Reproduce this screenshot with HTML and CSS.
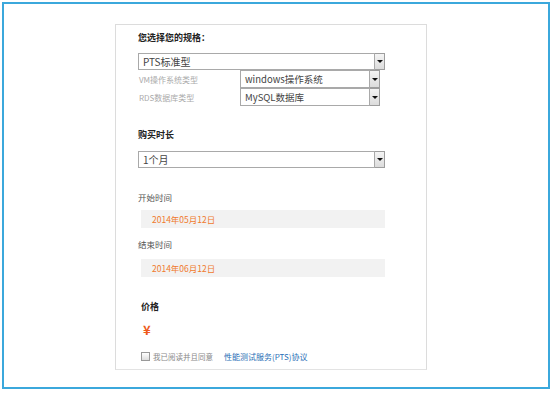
FILE: index.html
```html
<!DOCTYPE html>
<html lang="zh-CN">
<head>
    <meta charset="UTF-8">
    <meta name="viewport" content="width=device-width, initial-scale=1.0">
    <title>PTS购买</title>
    <link rel="stylesheet" href="styles.css">
</head>
<body>

    <div class="frame">
        <div class="card">
            <div class="title">您选择您的规格：</div>

            <div class="select wide">
                <span class="select-text">PTS标准型</span>
                <span class="arrow"></span>
            </div>

            <div class="row">
                <div class="row-label">VM操作系统类型</div>
                <div class="select narrow">
                    <span class="select-text">windows操作系统</span>
                    <span class="arrow"></span>
                </div>
            </div>
            <div class="row">
                <div class="row-label">RDS数据库类型</div>
                <div class="select narrow">
                    <span class="select-text">MySQL数据库</span>
                    <span class="arrow"></span>
                </div>
            </div>

            <div class="title section">购买时长</div>
            <div class="select wide">
                <span class="select-text">1个月</span>
                <span class="arrow"></span>
            </div>

            <div class="label">开始时间</div>
            <div class="date">2014年05月12日</div>

            <div class="label end">结束时间</div>
            <div class="date">2014年06月12日</div>

            <div class="title price">价格</div>
            <div class="yen">¥</div>

            <div class="agree">
                <span class="checkbox"></span>
                <span class="agree-text">我已阅读并且同意</span>
                <a class="agree-link" href="#">性能测试服务(PTS)协议</a>
            </div>
        </div>
    </div>

</body>
</html>
```

FILE: styles.css
```css
/* Base */
body {
    margin: 0;
    background-color: #fff;
    font-family: "Noto Sans CJK SC", "DejaVu Sans", sans-serif;
    color: #333;
}

.frame {
    margin: 2px 0 0 2px;
    width: 544px;
    height: 383px;
    border: 2px solid #3ba8dc;
    overflow: hidden;
}

.card {
    margin: 20px 0 0 111px;
    width: 288px;
    height: 339px;
    padding: 5px 0 0 22px;
    border: 1px solid #dcdcdc;
    border-bottom-color: #e3e3e3;
}

.title {
    font-size: 9px;
    font-weight: bold;
    line-height: 16px;
    color: #222;
    margin-bottom: 7px;
}

/* Fake select boxes */
.select {
    display: flex;
    height: 17px;
    box-sizing: border-box;
}

.select.wide {
    width: 247px;
}

.select.narrow {
    width: 140px;
    height: 18px;
}

.select-text {
    flex: 1;
    border: 1px solid #a9a9a9;
    padding-left: 4px;
    font-size: 10px;
    line-height: 15px;
    color: #444;
    background-color: #fff;
    white-space: nowrap;
    overflow: hidden;
}

.narrow .select-text {
    line-height: 16px;
    font-size: 9.5px;
}

.arrow {
    width: 9px;
    border: 1px solid #9d9d9d;
    border-left: none;
    background: linear-gradient(#f4f4f4, #dcdcdc);
    display: flex;
    align-items: center;
    justify-content: center;
}

.arrow::after {
    content: "";
    border-left: 3px solid transparent;
    border-right: 3px solid transparent;
    border-top: 3px solid #111;
}

.row {
    display: flex;
    align-items: center;
    height: 18px;
}

.row-label {
    width: 101px;
    padding-left: 1px;
    font-size: 8px;
    color: #aaa;
}

.title.section {
    margin-top: 21px;
    margin-bottom: 8px;
}

.label {
    margin-top: 21px;
    font-size: 8.5px;
    line-height: 16px;
    color: #555;
    margin-bottom: 5px;
}

.label.end {
    margin-top: 8px;
    margin-bottom: 7px;
}

.date {
    width: 233px;
    height: 18px;
    margin-left: 3px;
    padding-left: 11px;
    background-color: #f2f2f2;
    font-size: 8.5px;
    line-height: 18px;
    color: #f07a2c;
}

.title.price {
    margin-top: 22px;
    margin-left: 3px;
}

.yen {
    margin-left: 5px;
    font-size: 13px;
    font-weight: bold;
    line-height: 16px;
    color: #ee5a1c;
}

/* Agreement */
.agree {
    display: flex;
    align-items: center;
    margin-top: 10px;
    margin-left: 3px;
    height: 16px;
    font-size: 7.5px;
}

.checkbox {
    width: 7px;
    height: 7px;
    border: 1px solid #999;
    background: linear-gradient(#fff, #ddd);
    margin-right: 3px;
}

.agree-text {
    color: #888;
}

.agree-link {
    margin-left: 11px;
    font-size: 8px;
    color: #2a6fb6;
    text-decoration: none;
}
```
